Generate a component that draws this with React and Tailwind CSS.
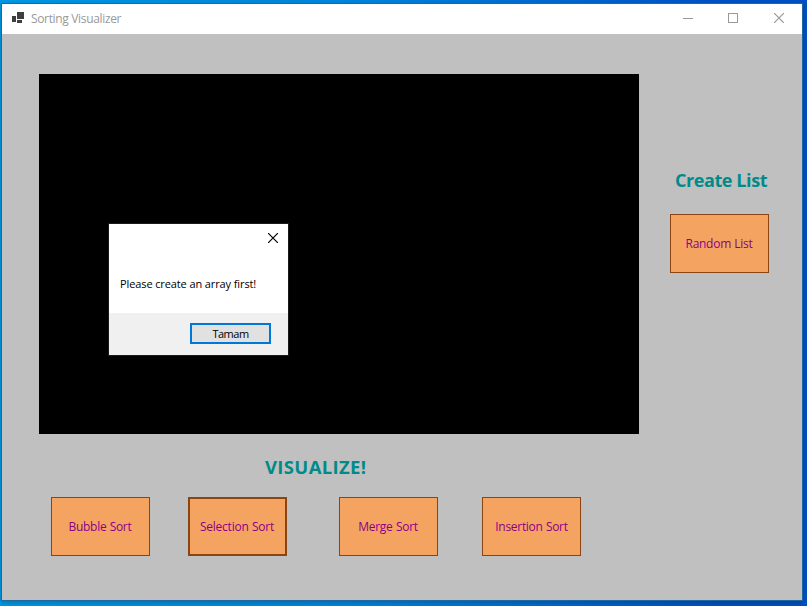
const sortButtons = [
  { label: 'Bubble Sort', place: 'ml-0', border: 'border', text: 'mr-px tracking-[-0.3px]' },
  { label: 'Selection Sort', place: 'ml-[38px]', border: 'border-2', text: 'mr-px tracking-[-0.23px]' },
  { label: 'Merge Sort', place: 'ml-[52px]', border: 'border', text: 'mr-px tracking-[-0.26px]' },
  { label: 'Insertion Sort', place: 'ml-[44px]', border: 'border', text: 'tracking-[-0.3px]' },
];

function ActionButton({ label, place, border, text }) {
  return (
    <button
      className={`flex h-[59px] w-[99px] shrink-0 items-center justify-center border-[#8b4513] bg-[#f4a460] text-[12px] leading-4 font-medium whitespace-nowrap text-[#8b008b] [word-spacing:0.5px] ${place} ${border}`}
    >
      <span className={text}>{label}</span>
    </button>
  );
}

function TitleBar() {
  return (
    <header className="flex h-[30px] items-center bg-white text-[#999999]">
      <svg className="ml-[10px] -mt-[3px] h-[11px] w-[12px]" viewBox="0 0 12 11" fill="#3f3f3f" shapeRendering="crispEdges">
        <rect x="5" y="0" width="7" height="7" />
        <rect x="0" y="4" width="4" height="6" />
        <rect x="5" y="8" width="5" height="3" />
      </svg>
      <h1 className="ml-[7px] text-[12px] leading-4 tracking-[-0.34px] whitespace-nowrap">Sorting Visualizer</h1>
      <div className="ml-auto flex h-full">
        <button className="flex w-[45px] pt-[9px] pl-[17px]" aria-label="Minimize">
          <svg width="10" height="10" viewBox="0 0 10 10" fill="none" stroke="currentColor" shapeRendering="crispEdges">
            <path d="M0 5.5H10" />
          </svg>
        </button>
        <button className="flex w-[45px] pt-[9px] pl-[17px]" aria-label="Maximize">
          <svg width="10" height="10" viewBox="0 0 10 10" fill="none" stroke="currentColor" shapeRendering="crispEdges">
            <rect x=".5" y=".5" width="9" height="9" />
          </svg>
        </button>
        <button className="flex w-[46px] pt-[9px] pl-[18px]" aria-label="Close">
          <svg width="10" height="10" viewBox="0 0 10 10" fill="none" stroke="currentColor" strokeWidth="1.2">
            <path d="M0 0L10 10M10 0L0 10" />
          </svg>
        </button>
      </div>
    </header>
  );
}

function MessageDialog() {
  return (
    <div className="absolute top-[149px] left-[69px] flex h-[133px] w-[181px] flex-col border border-[#1a1a1a] bg-white text-black">
      <div className="flex justify-end pt-[9px] pr-[10px]">
        <svg width="10" height="10" viewBox="0 0 10 10" fill="none" stroke="currentColor" strokeWidth="1.2">
          <path d="M0 0L10 10M10 0L0 10" />
        </svg>
      </div>
      <p className="mt-[33px] ml-[11px] text-[11px] leading-4 tracking-[-0.11px] whitespace-nowrap">Please create an array first!</p>
      <div className="mt-auto flex h-[42px] justify-end bg-[#f0f0f0] pt-[10px] pr-[17px]">
        <button className="flex h-[21px] w-[81px] items-center justify-center border-2 border-[#0078d7] bg-[#e1e1e1] text-[11px] leading-4 tracking-[-0.5px]">
          Tamam
        </button>
      </div>
    </div>
  );
}

export default function App() {
  return (
    <div className="h-[606px] w-[807px] overflow-hidden bg-linear-to-r from-[#0098e4] from-0% via-[#0084dc] via-45% to-[#0050c4] to-90% pt-[3px] pl-px font-['Open_Sans','Noto_Sans',sans-serif]">
      <div className="flex h-[598px] w-[802px] flex-col border border-[#2068a0] bg-[#c0c0c0] shadow-[0_2px_5px_rgba(0,0,0,0.22)]">
        <TitleBar />
        <main className="flex flex-1 pt-[40px] pl-[37px]">
          <section className="w-[600px]">
            <div className="relative h-[360px] bg-black">
              <MessageDialog />
            </div>
            <h2 className="mt-[20px] ml-[226px] text-[18.5px] leading-[26px] font-bold tracking-[0.33px] whitespace-nowrap text-[#008b8b]">VISUALIZE!</h2>
            <div className="mt-[17px] ml-[12px] flex">
              {sortButtons.map((b) => (
                <ActionButton key={b.label} {...b} />
              ))}
            </div>
          </section>
          <aside className="ml-[31px] w-[99px] pt-[93px]">
            <h2 className="ml-[5px] text-[18px] leading-[26px] font-bold tracking-[-0.42px] whitespace-nowrap text-[#008b8b]">Create List</h2>
            <div className="mt-[21px]">
              <ActionButton label="Random List" place="ml-0" border="border" text="mr-px tracking-[-0.28px]" />
            </div>
          </aside>
        </main>
      </div>
    </div>
  );
}
